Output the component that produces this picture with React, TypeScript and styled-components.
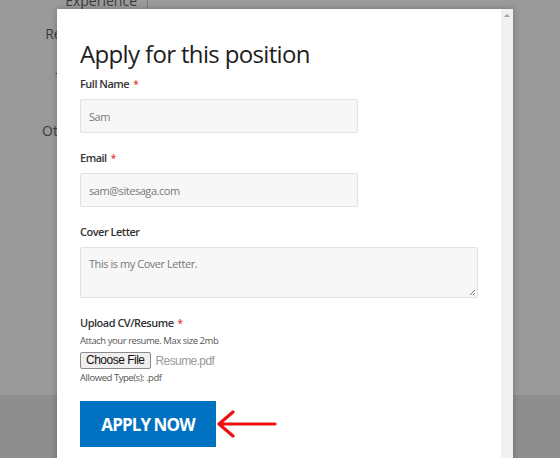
import React from "react";
import styled, { createGlobalStyle } from "styled-components";

const GlobalStyle = createGlobalStyle`
  html, body { margin: 0; padding: 0; }
  body { width: 560px; height: 458px; overflow: hidden; background: #999999; }
  * { box-sizing: border-box; }
`;

const Screen = styled.div`
  position: relative;
  width: 560px;
  height: 458px;
  overflow: hidden;
  font-family: "Open Sans", "Noto Sans", sans-serif;
`;

const BackPage = styled.div`
  display: flex;
  flex-direction: column;
  height: 100%;
`;

const BackTable = styled.div`
  display: grid;
  grid-template-columns: 148px 1fr;
  height: 395px;
  background: #9a9a9a;
`;

const BackLabels = styled.div`
  display: flex;
  flex-direction: column;
  align-items: flex-end;
  padding-right: 10px;
  border-right: 1px solid #7c7c7c;
  font-size: 14px;
  color: #3a3a3a;
`;

const BackLabel = styled.div<{ $gap: number }>`
  margin-top: ${(p) => p.$gap}px;
  line-height: 18px;
  white-space: nowrap;
`;

const BackFooter = styled.div`
  flex: 1;
  background: #8e8e8e;
`;

const Modal = styled.div`
  position: absolute;
  left: 57px;
  top: 9px;
  width: 456px;
  height: 470px;
  display: flex;
  background: #ffffff;
  box-shadow: 0 0 6px rgba(0, 0, 0, 0.25);
`;

const ModalBody = styled.div`
  flex: 1;
  padding: 30px 0 0 23px;
  display: flex;
  flex-direction: column;
  align-items: flex-start;
`;

const Scrollbar = styled.div`
  width: 12px;
  background: #f0f0f0;
  display: flex;
  justify-content: center;
  padding-top: 5px;
`;

const ScrollArrow = styled.div`
  width: 0;
  height: 0;
  border-left: 3px solid transparent;
  border-right: 3px solid transparent;
  border-bottom: 3px solid #a3a3a3;
`;

const Title = styled.h2`
  margin: 0 0 8px;
  font-size: 24px;
  line-height: 29px;
  font-weight: 400;
  color: #1e1e1e;
  letter-spacing: -0.65px;
`;

const Label = styled.label<{ $tight?: boolean }>`
  display: block;
  font-size: 11px;
  line-height: 16px;
  font-weight: 600;
  color: #333333;
  letter-spacing: -0.5px;
  margin-bottom: ${(p) => (p.$tight ? 3 : 7)}px;
`;

const Required = styled.span`
  color: #e23b3b;
  margin-left: 4px;
  font-size: 10px;
`;

const Field = styled.div`
  margin-bottom: 17px;
`;

const TextInput = styled.div<{ $width: number; $height: number }>`
  width: ${(p) => p.$width}px;
  height: ${(p) => p.$height}px;
  background: #f7f7f7;
  border: 1px solid #e2e2e2;
  border-radius: 2px;
  padding: 0 8px;
  font-size: 11px;
  letter-spacing: -0.45px;
  color: #777777;
  position: relative;
`;

const SingleLine = styled(TextInput)`
  display: flex;
  align-items: center;
`;

const MultiLine = styled(TextInput)`
  padding-top: 8px;
  line-height: 16px;
`;

const ResizeGrip = styled.svg`
  position: absolute;
  right: 1px;
  bottom: 1px;
`;

const Help = styled.div`
  font-size: 9.5px;
  line-height: 14px;
  letter-spacing: -0.45px;
  color: #555555;
`;

const FileRow = styled.div`
  display: flex;
  align-items: center;
  gap: 5px;
  margin: 4px 0 2px;
  font-family: "Liberation Sans", Arial, sans-serif;
`;

const FileButton = styled.button`
  height: 17px;
  padding: 0 5px;
  font-family: "Liberation Sans", Arial, sans-serif;
  font-size: 12px;
  letter-spacing: -0.5px;
  color: #111;
  background: #efefef;
  border: 1px solid #8a8a8a;
  border-radius: 2px;
  line-height: 15px;
`;

const FileName = styled.span`
  font-size: 12px;
  letter-spacing: -0.6px;
  color: #9a9a9a;
`;

const ActionRow = styled.div`
  display: flex;
  align-items: center;
  margin-top: 16px;
`;

const ApplyButton = styled.button`
  width: 136px;
  height: 46px;
  border: none;
  background: #0071c1;
  color: #ffffff;
  font-family: "Open Sans", "Noto Sans", sans-serif;
  font-size: 17px;
  font-weight: 700;
  letter-spacing: -0.9px;
  padding: 0;
`;

const Arrow = styled.svg`
  margin-left: 0;
`;

export default function App() {
  return (
    <>
      <GlobalStyle />
      <Screen>
        <BackPage>
          <BackTable>
            <BackLabels>
              <BackLabel $gap={-8}>Experience</BackLabel>
              <BackLabel $gap={15}>Requirements</BackLabel>
              <BackLabel $gap={14}>Job Location</BackLabel>
              <BackLabel $gap={47}>Other Benefits</BackLabel>
            </BackLabels>
            <div />
          </BackTable>
          <BackFooter />
        </BackPage>

        <Modal>
          <ModalBody>
            <Title>Apply for this position</Title>

            <Field>
              <Label>
                Full Name<Required>*</Required>
              </Label>
              <SingleLine $width={278} $height={34}>Sam</SingleLine>
            </Field>

            <Field>
              <Label>
                Email<Required>*</Required>
              </Label>
              <SingleLine $width={278} $height={34}>sam@sitesaga.com</SingleLine>
            </Field>

            <Field>
              <Label>Cover Letter</Label>
              <MultiLine $width={398} $height={51}>
                This is my Cover Letter.
                <ResizeGrip width="8" height="8" viewBox="0 0 8 8">
                  <path d="M7 2 L2 7 M7 5 L5 7" stroke="#777" strokeWidth="1" />
                </ResizeGrip>
              </MultiLine>
            </Field>

            <div>
              <Label as="div" $tight>
                Upload CV/Resume<Required>*</Required>
              </Label>
              <Help>Attach your resume. Max size 2mb</Help>
              <FileRow>
                <FileButton type="button">Choose File</FileButton>
                <FileName>Resume.pdf</FileName>
              </FileRow>
              <Help>Allowed Type(s): .pdf</Help>
            </div>

            <ActionRow>
              <ApplyButton type="button">APPLY NOW</ApplyButton>
              <Arrow width="62" height="28" viewBox="0 0 62 28">
                <path
                  d="M3 14 L59 14 M17 2 L3 14 L17 26"
                  stroke="#ee1111"
                  strokeWidth="3.2"
                  fill="none"
                  strokeLinecap="round"
                  strokeLinejoin="round"
                />
              </Arrow>
            </ActionRow>
          </ModalBody>
          <Scrollbar>
            <ScrollArrow />
          </Scrollbar>
        </Modal>
      </Screen>
    </>
  );
}
